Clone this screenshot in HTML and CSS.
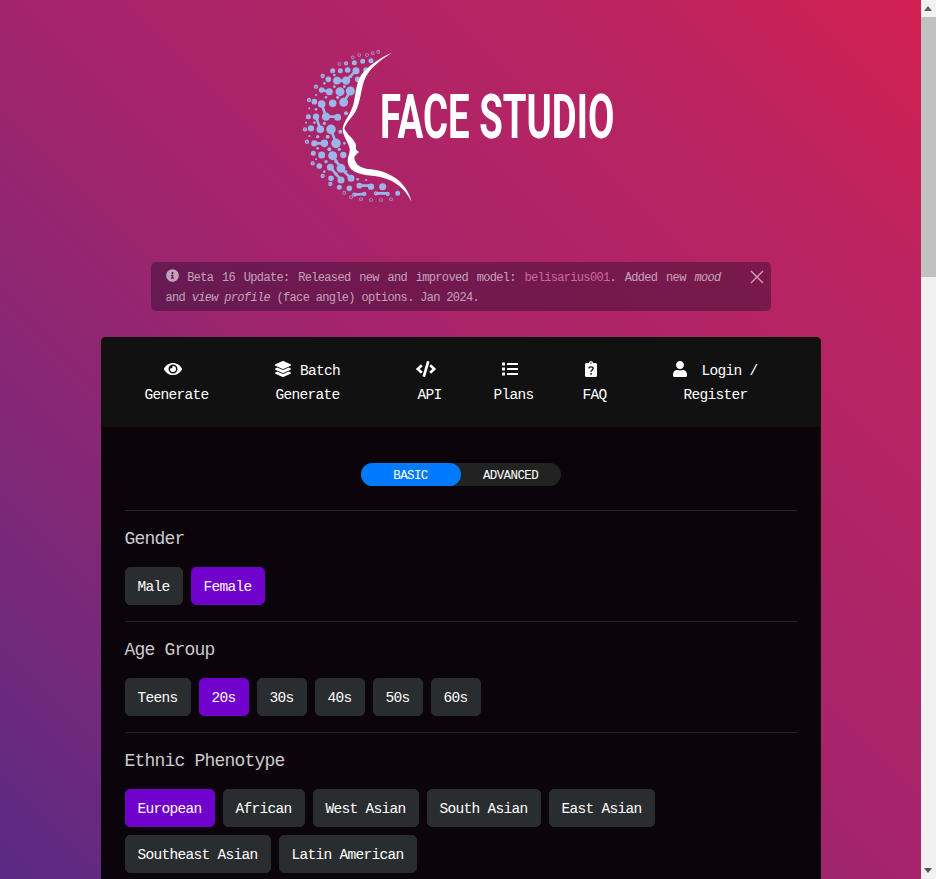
FILE: index.html
```html
<!DOCTYPE html>
<html lang="en">
<head>
    <meta charset="UTF-8">
    <meta name="viewport" content="width=device-width, initial-scale=1.0">
    <title>Face Studio</title>
    <link rel="stylesheet" href="styles.css">
</head>
<body>
    <header class="logo-wrap">
        <svg class="logo" viewBox="0 0 1020 525" role="img" aria-label="Face Studio">
            <g class="logo-dots">
                <circle cx="262" cy="35" r="1"/><circle cx="245" cy="40" r="1"/><circle cx="228" cy="45" r="1"/><circle cx="205" cy="45" r="1"/><circle cx="185" cy="52" r="1"/>
                <circle cx="240" cy="62" r="3"/><circle cx="215" cy="64" r="3"/><circle cx="190" cy="68" r="3"/>
                <circle cx="165" cy="70" r="2"/><circle cx="145" cy="72" r="1"/><circle cx="225" cy="90" r="4"/><circle cx="195" cy="92" r="6"/>
                <circle cx="170" cy="90" r="4"/><circle cx="148" cy="92" r="3"/><circle cx="200" cy="118" r="4"/>
                <circle cx="165" cy="122" r="8"/><circle cx="138" cy="122" r="7"/><circle cx="112" cy="118" r="4"/>
                <circle cx="95" cy="108" r="2"/><circle cx="125" cy="92" r="3"/><circle cx="178" cy="153" r="9"/>
                <circle cx="147" cy="155" r="9"/><circle cx="115" cy="155" r="6"/><circle cx="92" cy="150" r="4"/>
                <circle cx="75" cy="140" r="2"/><circle cx="158" cy="187" r="9"/><circle cx="125" cy="190" r="7"/>
                <circle cx="92" cy="192" r="7"/><circle cx="70" cy="185" r="4"/><circle cx="54" cy="180" r="2"/>
                <circle cx="105" cy="230" r="8"/><circle cx="140" cy="232" r="6"/><circle cx="75" cy="230" r="5"/>
                <circle cx="52" cy="230" r="3"/><circle cx="120" cy="268" r="10"/><circle cx="88" cy="268" r="7"/>
                <circle cx="60" cy="265" r="5"/><circle cx="42" cy="268" r="2"/><circle cx="135" cy="310" r="10"/>
                <circle cx="100" cy="310" r="7"/><circle cx="70" cy="310" r="5"/><circle cx="48" cy="305" r="2"/>
                <circle cx="125" cy="347" r="9"/><circle cx="157" cy="345" r="5"/><circle cx="92" cy="345" r="6"/>
                <circle cx="67" cy="340" r="3"/><circle cx="150" cy="385" r="9"/><circle cx="118" cy="382" r="6"/>
                <circle cx="85" cy="378" r="4"/><circle cx="65" cy="370" r="2"/><circle cx="180" cy="415" r="6"/>
                <circle cx="150" cy="420" r="6"/><circle cx="120" cy="415" r="4"/><circle cx="95" cy="408" r="2"/>
                <circle cx="275" cy="440" r="6"/><circle cx="240" cy="440" r="5"/><circle cx="205" cy="437" r="4"/>
                <circle cx="175" cy="445" r="4"/><circle cx="145" cy="442" r="3"/><circle cx="118" cy="432" r="2"/>
                <circle cx="320" cy="460" r="3"/><circle cx="290" cy="462" r="2"/><circle cx="255" cy="460" r="2"/>
                <circle cx="220" cy="462" r="2"/><circle cx="190" cy="464" r="2"/><circle cx="160" cy="458" r="1"/>
                <circle cx="300" cy="478" r="1"/><circle cx="270" cy="480" r="1"/><circle cx="240" cy="480" r="1"/>
                <circle cx="210" cy="478" r="1"/><circle cx="180" cy="472" r="1"/>
                <path class="logo-links" d="M178 153 158 187M105 230H140M100 310H70M120 268 135 310M150 385 180 415M205 437H240M255 460H290M165 122H138M125 347 150 385M92 150 115 155M75 230 88 268M195 92 165 122M118 382 150 420M190 464 220 462M92 192 105 230"/>
            </g>
            <g class="logo-dots-small">
                <circle cx="165" cy="220" r="6"/><circle cx="75" cy="208" r="4"/><circle cx="55" cy="205" r="3"/>
                <circle cx="45" cy="248" r="3"/><circle cx="70" cy="248" r="4"/><circle cx="100" cy="250" r="5"/>
                <circle cx="148" cy="275" r="6"/><circle cx="110" cy="290" r="6"/><circle cx="80" cy="290" r="5"/>
                <circle cx="55" cy="288" r="3"/><circle cx="160" cy="310" r="4"/><circle cx="115" cy="328" r="6"/>
                <circle cx="80" cy="325" r="4"/><circle cx="145" cy="328" r="5"/><circle cx="105" cy="365" r="5"/>
                <circle cx="135" cy="365" r="5"/><circle cx="75" cy="358" r="3"/><circle cx="165" cy="395" r="4"/>
                <circle cx="100" cy="395" r="4"/><circle cx="135" cy="402" r="5"/><circle cx="200" cy="418" r="4"/>
                <circle cx="225" cy="420" r="3"/><circle cx="130" cy="105" r="4"/><circle cx="180" cy="110" r="4"/>
                <circle cx="100" cy="130" r="4"/><circle cx="130" cy="140" r="4"/><circle cx="160" cy="140" r="4"/>
                <circle cx="75" cy="165" r="3"/><circle cx="105" cy="172" r="4"/><circle cx="140" cy="172" r="5"/>
            </g>
            <path fill="#fff" d="M303 38C268 60 240 82 226 108 210 138 212 170 198 205 190 228 170 240 160 265 168 285 185 292 194 312 198 322 188 326 204 336 196 344 186 348 192 362 200 378 210 384 240 388 290 394 345 420 362 485 338 438 300 414 250 408 212 404 180 398 172 374 166 352 178 342 176 326 172 306 154 288 155 265 160 240 180 222 188 190 196 150 196 120 218 96 240 72 270 52 303 38Z"/>
            <text class="logo-text" x="267" y="293" textLength="703" lengthAdjust="spacingAndGlyphs">FACE STUDIO</text>
        </svg>
    </header>

    <div class="notice">
        <p class="notice-text">
            <svg class="notice-icon" viewBox="0 0 512 512"><path fill="currentColor" d="M256 8C119.043 8 8 119.083 8 256c0 136.997 111.043 248 248 248s248-111.003 248-248C504 119.083 392.957 8 256 8zm0 110c23.196 0 42 18.804 42 42s-18.804 42-42 42-42-18.804-42-42 18.804-42 42-42zm56 254c0 6.627-5.373 12-12 12h-88c-6.627 0-12-5.373-12-12v-24c0-6.627 5.373-12 12-12h12v-64h-12c-6.627 0-12-5.373-12-12v-24c0-6.627 5.373-12 12-12h64c6.627 0 12 5.373 12 12v100h12c6.627 0 12 5.373 12 12v24z"/></svg>
            Beta 16 Update: Released new and improved model: <a href="#" class="notice-link">belisarius001</a>. Added new <em>mood</em> and <em>view profile</em> (face angle) options. Jan 2024.
        </p>
        <button type="button" class="notice-close" aria-label="Close">
            <svg viewBox="0 0 14 14"><path d="M1 1 13 13M13 1 1 13"/></svg>
        </button>
    </div>

    <main class="panel">
        <nav class="main-nav">
            <a href="#" class="nav-item">
                <svg class="nav-icon nav-icon-solo" viewBox="0 0 576 512"><path fill="currentColor" d="M572.52 241.4C518.29 135.59 410.93 64 288 64S57.68 135.64 3.48 241.41a32.35 32.35 0 0 0 0 29.19C57.71 376.41 165.07 448 288 448s230.32-71.64 284.52-177.41a32.35 32.35 0 0 0 0-29.19zM288 400a144 144 0 1 1 144-144 143.93 143.93 0 0 1-144 144zm0-240a95.31 95.31 0 0 0-25.31 3.79 47.85 47.85 0 0 1-66.9 66.9A95.78 95.78 0 1 0 288 160z"/></svg><br>Generate
            </a>
            <a href="#" class="nav-item">
                <svg class="nav-icon" viewBox="0 0 512 512"><path fill="currentColor" d="M12.41 148.02l232.94 105.67c6.8 3.09 14.49 3.09 21.29 0l232.94-105.67c16.55-7.51 16.55-32.52 0-40.03L266.65 2.31a25.607 25.607 0 0 0-21.29 0L12.41 107.98c-16.55 7.51-16.55 32.53 0 40.04zm487.18 88.28l-58.09-26.33-161.64 73.27c-7.56 3.43-15.59 5.17-23.86 5.17s-16.29-1.74-23.86-5.17L70.51 209.97l-58.1 26.33c-16.55 7.5-16.55 32.5 0 40l232.94 105.59c6.8 3.08 14.49 3.08 21.29 0L499.59 276.3c16.55-7.5 16.55-32.5 0-40zm0 127.8l-57.87-26.23-161.86 73.37c-7.56 3.43-15.59 5.17-23.86 5.17s-16.29-1.74-23.86-5.17L70.29 337.87 12.41 364.1c-16.55 7.5-16.55 32.5 0 40l232.94 105.59c6.8 3.08 14.49 3.08 21.29 0L499.59 404.1c16.55-7.5 16.55-32.5 0-40z"/></svg><span class="nav-gap">Batch</span><br>Generate
            </a>
            <a href="#" class="nav-item">
                <svg class="nav-icon nav-icon-solo" viewBox="0 0 640 512"><path fill="currentColor" d="M278.9 511.5l-61-17.7c-6.4-1.8-10-8.5-8.2-14.9L346.2 8.7c1.8-6.4 8.5-10 14.9-8.2l61 17.7c6.4 1.8 10 8.5 8.2 14.9L293.8 503.3c-1.9 6.4-8.5 10.1-14.9 8.2zm-114-112.2l43.5-46.4c4.6-4.9 4.3-12.7-.8-17.2L117 256l90.6-79.7c5.1-4.5 5.5-12.3.8-17.2l-43.5-46.4c-4.5-4.8-12.1-5.1-17-.5L3.8 247.2c-5.1 4.7-5.1 12.8 0 17.5l144.1 135.1c4.9 4.6 12.5 4.4 17-.5zm327.2.6l144.1-135.1c5.1-4.7 5.1-12.8 0-17.5L492.1 112.1c-4.8-4.5-12.4-4.3-17 .5L431.6 159c-4.6 4.9-4.3 12.7.8 17.2L523 256l-90.6 79.7c-5.1 4.5-5.5 12.3-.8 17.2l43.5 46.4c4.5 4.9 12.1 5.1 17 .6z"/></svg><br>API
            </a>
            <a href="#" class="nav-item">
                <svg class="nav-icon nav-icon-solo" viewBox="0 0 512 512"><path fill="currentColor" d="M80 368H16a16 16 0 0 0-16 16v64a16 16 0 0 0 16 16h64a16 16 0 0 0 16-16v-64a16 16 0 0 0-16-16zm0-320H16A16 16 0 0 0 0 64v64a16 16 0 0 0 16 16h64a16 16 0 0 0 16-16V64a16 16 0 0 0-16-16zm0 160H16a16 16 0 0 0-16 16v64a16 16 0 0 0 16 16h64a16 16 0 0 0 16-16v-64a16 16 0 0 0-16-16zm416 176H176a16 16 0 0 0-16 16v32a16 16 0 0 0 16 16h320a16 16 0 0 0 16-16v-32a16 16 0 0 0-16-16zm0-320H176a16 16 0 0 0-16 16v32a16 16 0 0 0 16 16h320a16 16 0 0 0 16-16V80a16 16 0 0 0-16-16zm0 160H176a16 16 0 0 0-16 16v32a16 16 0 0 0 16 16h320a16 16 0 0 0 16-16v-32a16 16 0 0 0-16-16z"/></svg><br>Plans
            </a>
            <a href="#" class="nav-item">
                <svg class="nav-icon nav-icon-solo" viewBox="0 0 384 512"><path fill="currentColor" d="M336 64h-80c0-35.3-28.7-64-64-64s-64 28.7-64 64H48C21.5 64 0 85.5 0 112v352c0 26.5 21.5 48 48 48h288c26.5 0 48-21.5 48-48V112c0-26.5-21.5-48-48-48zM192 40c13.3 0 24 10.7 24 24s-10.7 24-24 24-24-10.7-24-24 10.7-24 24-24z"/><path fill="none" stroke="#111" stroke-width="44" d="M125 240c0-70 134-70 134 0 0 50-67 45-67 105"/><circle cx="192" cy="415" r="28" fill="#111"/></svg><br>FAQ
            </a>
            <a href="#" class="nav-item">
                <svg class="nav-icon" viewBox="0 0 448 512"><path fill="currentColor" d="M224 256c70.7 0 128-57.3 128-128S294.7 0 224 0 96 57.3 96 128s57.3 128 128 128zm89.6 32h-16.7c-22.2 10.2-46.9 16-72.9 16s-50.6-5.8-72.9-16h-16.7C60.2 288 0 348.2 0 422.4V464c0 26.5 21.5 48 48 48h352c26.5 0 48-21.5 48-48v-41.6c0-74.2-60.2-134.4-134.4-134.4z"/></svg><span class="nav-gap-wide">Login /</span><br>Register
            </a>
        </nav>

        <div class="panel-body">
            <div class="mode-toggle">
                <button type="button" class="mode-btn active">BASIC</button>
                <button type="button" class="mode-btn">ADVANCED</button>
            </div>

            <section class="option-group">
                <h3>Gender</h3>
                <div class="option-row">
                    <button type="button" class="option-btn">Male</button>
                    <button type="button" class="option-btn selected">Female</button>
                </div>
            </section>

            <section class="option-group">
                <h3>Age Group</h3>
                <div class="option-row">
                    <button type="button" class="option-btn">Teens</button>
                    <button type="button" class="option-btn selected">20s</button>
                    <button type="button" class="option-btn">30s</button>
                    <button type="button" class="option-btn">40s</button>
                    <button type="button" class="option-btn">50s</button>
                    <button type="button" class="option-btn">60s</button>
                </div>
            </section>

            <section class="option-group">
                <h3>Ethnic Phenotype</h3>
                <div class="option-row">
                    <button type="button" class="option-btn selected">European</button>
                    <button type="button" class="option-btn">African</button>
                    <button type="button" class="option-btn">West Asian</button>
                    <button type="button" class="option-btn">South Asian</button>
                    <button type="button" class="option-btn">East Asian</button>
                    <button type="button" class="option-btn">Southeast Asian</button>
                    <button type="button" class="option-btn">Latin American</button>
                </div>
            </section>
        </div>
    </main>

    <div class="scroll-track" aria-hidden="true">
        <span class="scroll-arrow scroll-arrow-up"></span>
        <span class="scroll-thumb"></span>
        <span class="scroll-arrow scroll-arrow-down"></span>
    </div>
</body>
</html>
```

FILE: styles.css
```css
html {
    background: linear-gradient(45deg, #5a2a84 0%, #7c2878 21%, #a5246c 50%, #bb2460 82%, #d41f50 100%) fixed;
}

body {
    margin: 0;
    padding: 50px 15px 40px 0;
    font-family: "Liberation Mono", "DejaVu Sans Mono", monospace;
    font-size: 14.5px;
    letter-spacing: -0.7px;
    line-height: 24px;
    color: #fff;
}

.logo-wrap {
    display: flex;
    justify-content: center;
    height: 212px;
}

.logo {
    width: 340px;
    height: 175px;
    margin: -10px 0 0 1px;
}

.logo-dots circle {
    fill: #9cb6ea;
    stroke: #9cb6ea;
    stroke-width: 9px;
}

.logo-dots-small circle {
    fill: #9cb6ea;
}

.logo-links {
    fill: none;
    stroke: #9cb6ea;
    stroke-width: 8px;
}

.logo-text {
    font-family: "Roboto", "Liberation Sans", sans-serif;
    font-weight: 700;
    font-size: 182px;
    letter-spacing: 0;
    fill: #fff;
}

.notice {
    display: flex;
    width: 620px;
    box-sizing: border-box;
    margin: 0 auto 26px;
    padding: 6px 7px 3px 15px;
    background-color: rgba(30, 10, 40, 0.4);
    border-radius: 5px;
    color: rgba(255, 255, 255, 0.6);
    font-size: 12px;
    letter-spacing: -0.67px;
    line-height: 20px;
}

.notice-text {
    flex: 1;
    margin: 0;
    padding-right: 29px;
    text-align: justify;
}

.notice-icon {
    width: 13px;
    height: 13px;
    vertical-align: -1px;
}

.notice-link {
    color: #d0689f;
    text-decoration: none;
}

.notice-close {
    width: 14px;
    height: 14px;
    margin-top: 2px;
    padding: 0;
    background: none;
    border: none;
    cursor: pointer;
}

.notice-close svg {
    display: block;
    fill: none;
    stroke: #d9a0bb;
    stroke-width: 1.4;
}

.panel {
    width: 720px;
    min-height: 2560px;
    margin: 0 auto;
    background-color: #0b040b;
    border-radius: 5px;
    overflow: hidden;
}

.main-nav {
    display: grid;
    grid-template-columns: 120px 142px 102px 66px 96px 146px;
    height: 90px;
    padding: 22px 32px 0 16px;
    box-sizing: border-box;
    background-color: #111;
}

.nav-item {
    color: #fff;
    text-decoration: none;
    text-align: center;
}

.nav-icon {
    height: 16px;
    vertical-align: -2px;
}

/* the icon sits alone on its line, with a space behind it */
.nav-icon-solo {
    margin-right: 8px;
}

.nav-gap {
    margin-left: 9px;
}

.nav-gap-wide {
    margin-left: 14px;
}

.panel-body {
    padding: 36px 24px 0;
}

.mode-toggle {
    display: flex;
    width: 200px;
    height: 23px;
    margin: 0 auto 24px;
    background-color: #222;
    border-radius: 12px;
}

.mode-btn {
    flex: 1;
    padding: 2px 0 0;
    background: none;
    border: none;
    border-radius: 12px;
    color: #fff;
    font-family: inherit;
    font-size: 12.5px;
    letter-spacing: -0.6px;
    cursor: pointer;
}

.mode-btn.active {
    background-color: #007bff;
}

.option-group {
    padding: 16px 0;
    border-top: 1px solid rgba(255, 255, 255, 0.13);
}

.option-group h3 {
    margin: 0 0 16px;
    font-size: 18px;
    font-weight: 400;
    letter-spacing: -0.8px;
    line-height: 24px;
    color: #ccc;
}

.option-row {
    display: flex;
    flex-wrap: wrap;
    gap: 8px;
}

.option-btn {
    height: 38px;
    padding: 1px 12px 0;
    background-color: #2a2d30;
    border: 1px solid #2a2d30;
    border-radius: 5px;
    color: #fff;
    font-family: inherit;
    font-size: 14.5px;
    letter-spacing: -0.7px;
    cursor: pointer;
}

.option-btn.selected {
    background-color: #7000cc;
    border-color: #7000cc;
}

/* the window's scrollbar, as the page shows it */
.scroll-track {
    position: fixed;
    top: 0;
    right: 0;
    bottom: 0;
    width: 15px;
    background-color: #f1f1f1;
}

.scroll-thumb {
    position: absolute;
    top: 17px;
    left: 0;
    width: 15px;
    height: 260px;
    background-color: #c1c1c1;
}

.scroll-arrow {
    position: absolute;
    left: 3px;
    border-left: 4.5px solid transparent;
    border-right: 4.5px solid transparent;
}

.scroll-arrow-up {
    top: 6px;
    border-bottom: 5px solid #606060;
}

.scroll-arrow-down {
    bottom: 6px;
    border-top: 5px solid #505050;
}
```
